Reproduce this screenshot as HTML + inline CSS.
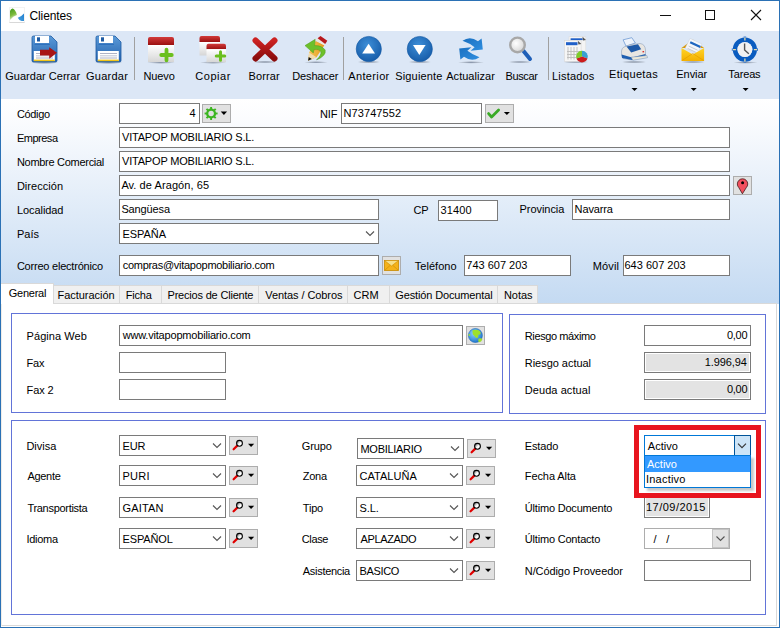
<!DOCTYPE html>
<html><head><meta charset="utf-8"><style>
html,body{margin:0;padding:0;width:780px;height:628px;overflow:hidden;background:#fff}
body{position:relative;font-family:'Liberation Sans', sans-serif}
.a{position:absolute}
.t{position:absolute;white-space:nowrap;font-family:'Liberation Sans', sans-serif}
svg{position:absolute;left:0;top:0}
</style></head><body>
<div class="a" style="left:0px;top:0px;width:780px;height:628px;background:#ffffff;"></div>
<div class="a" style="left:1px;top:31px;width:778px;height:68px;background:#dce7f6;"></div>
<div class="a" style="left:1px;top:99px;width:778px;height:205px;background:linear-gradient(#ffffff 0px, #fbfcfe 20px, #c4daf2 205px);"></div>
<div class="t" style="left:29.50px;top:10px;font-size:12px;line-height:13px;letter-spacing:-0.114px;color:#000;">Clientes</div>
<div class="a" style="left:134px;top:37px;width:1px;height:43px;background:#a0a0a0;"></div>
<div class="a" style="left:343px;top:37px;width:1px;height:43px;background:#a0a0a0;"></div>
<div class="a" style="left:548px;top:37px;width:1px;height:43px;background:#a0a0a0;"></div>
<div class="t" style="left:5.25px;top:70px;font-size:11px;line-height:13px;letter-spacing:0.019px;color:#000;">Guardar Cerrar</div>
<div class="t" style="left:86.00px;top:70px;font-size:11px;line-height:13px;letter-spacing:0.250px;color:#000;">Guardar</div>
<div class="t" style="left:143.50px;top:70px;font-size:11px;line-height:13px;letter-spacing:-0.125px;color:#000;">Nuevo</div>
<div class="t" style="left:195.25px;top:70px;font-size:11px;line-height:13px;letter-spacing:0.550px;color:#000;">Copiar</div>
<div class="t" style="left:248.50px;top:70px;font-size:11px;line-height:13px;letter-spacing:0.100px;color:#000;">Borrar</div>
<div class="t" style="left:292.25px;top:70px;font-size:11px;line-height:13px;letter-spacing:-0.143px;color:#000;">Deshacer</div>
<div class="t" style="left:348.25px;top:70px;font-size:11px;line-height:13px;letter-spacing:0.357px;color:#000;">Anterior</div>
<div class="t" style="left:395.25px;top:70px;font-size:11px;line-height:13px;letter-spacing:0.156px;color:#000;">Siguiente</div>
<div class="t" style="left:446.25px;top:70px;font-size:11px;line-height:13px;letter-spacing:0.028px;color:#000;">Actualizar</div>
<div class="t" style="left:505.50px;top:70px;font-size:11px;line-height:13px;letter-spacing:-0.360px;color:#000;">Buscar</div>
<div class="t" style="left:552.00px;top:70px;font-size:11px;line-height:13px;letter-spacing:0.200px;color:#000;">Listados</div>
<div class="t" style="left:609.00px;top:68px;font-size:11px;line-height:13px;letter-spacing:0.362px;color:#000;">Etiquetas</div>
<div class="t" style="left:676.30px;top:68px;font-size:11px;line-height:13px;letter-spacing:-0.060px;color:#000;">Enviar</div>
<div class="t" style="left:728.30px;top:68px;font-size:11px;line-height:13px;letter-spacing:-0.140px;color:#000;">Tareas</div>
<div class="t" style="left:16.90px;top:108px;font-size:11px;line-height:13px;letter-spacing:-0.320px;color:#000;">Código</div>
<div class="t" style="left:16.90px;top:132px;font-size:11px;line-height:13px;letter-spacing:-0.483px;color:#000;">Empresa</div>
<div class="t" style="left:16.90px;top:156px;font-size:11px;line-height:13px;letter-spacing:-0.287px;color:#000;">Nombre Comercial</div>
<div class="t" style="left:16.90px;top:180px;font-size:11px;line-height:13px;letter-spacing:0.038px;color:#000;">Dirección</div>
<div class="t" style="left:16.90px;top:204px;font-size:11px;line-height:13px;letter-spacing:-0.062px;color:#000;">Localidad</div>
<div class="t" style="left:16.90px;top:228px;font-size:11px;line-height:13px;letter-spacing:0.033px;color:#000;">País</div>
<div class="t" style="left:16.90px;top:260px;font-size:11px;line-height:13px;letter-spacing:-0.218px;color:#000;">Correo electrónico</div>
<div class="a" style="left:119px;top:103px;width:81px;height:21px;background:#ffffff;border:1px solid #7a7a7a;box-sizing:border-box;"></div>
<div class="t" style="left:189.50px;top:107px;font-size:11px;line-height:13px;letter-spacing:-0.250px;color:#000;">4</div>
<div class="a" style="left:202px;top:104px;width:29px;height:19px;background:#e1e1e1;border:1px solid #adadad;box-sizing:border-box;"></div>
<div class="t" style="left:320.00px;top:108px;font-size:11px;line-height:13px;letter-spacing:-0.100px;color:#000;">NIF</div>
<div class="a" style="left:341px;top:103px;width:141px;height:21px;background:#ffffff;border:1px solid #7a7a7a;box-sizing:border-box;"></div>
<div class="t" style="left:343.40px;top:107px;font-size:11px;line-height:13px;letter-spacing:0.113px;color:#000;">N73747552</div>
<div class="a" style="left:485px;top:104px;width:29px;height:19px;background:#e1e1e1;border:1px solid #adadad;box-sizing:border-box;"></div>
<div class="a" style="left:119px;top:127px;width:611px;height:21px;background:#ffffff;border:1px solid #7a7a7a;box-sizing:border-box;"></div>
<div class="t" style="left:122.00px;top:131px;font-size:11px;line-height:13px;letter-spacing:-0.191px;color:#000;">VITAPOP MOBILIARIO S.L.</div>
<div class="a" style="left:119px;top:151px;width:611px;height:21px;background:#ffffff;border:1px solid #7a7a7a;box-sizing:border-box;"></div>
<div class="t" style="left:122.00px;top:155px;font-size:11px;line-height:13px;letter-spacing:-0.191px;color:#000;">VITAPOP MOBILIARIO S.L.</div>
<div class="a" style="left:119px;top:175px;width:611px;height:21px;background:#ffffff;border:1px solid #7a7a7a;box-sizing:border-box;"></div>
<div class="t" style="left:121.40px;top:179px;font-size:11px;line-height:13px;letter-spacing:0.075px;color:#000;">Av. de Aragón, 65</div>
<div class="a" style="left:733px;top:176px;width:19px;height:19px;background:#e1e1e1;border:1px solid #adadad;box-sizing:border-box;"></div>
<div class="a" style="left:119px;top:199px;width:260px;height:21px;background:#ffffff;border:1px solid #7a7a7a;box-sizing:border-box;"></div>
<div class="t" style="left:121.40px;top:203px;font-size:11px;line-height:13px;letter-spacing:-0.129px;color:#000;">Sangüesa</div>
<div class="t" style="left:413.60px;top:204px;font-size:11px;line-height:13px;letter-spacing:-0.200px;color:#000;">CP</div>
<div class="a" style="left:438px;top:200px;width:60px;height:21px;background:#ffffff;border:1px solid #7a7a7a;box-sizing:border-box;"></div>
<div class="t" style="left:440.50px;top:204px;font-size:11px;line-height:13px;letter-spacing:0.125px;color:#000;">31400</div>
<div class="t" style="left:519.50px;top:203px;font-size:11px;line-height:13px;letter-spacing:-0.050px;color:#000;">Provincia</div>
<div class="a" style="left:572px;top:199px;width:158px;height:21px;background:#ffffff;border:1px solid #7a7a7a;box-sizing:border-box;"></div>
<div class="t" style="left:574.60px;top:203px;font-size:11px;line-height:13px;letter-spacing:-0.133px;color:#000;">Navarra</div>
<div class="a" style="left:119px;top:223px;width:260px;height:21px;background:#ffffff;border:1px solid #7a7a7a;box-sizing:border-box;"></div>
<div class="t" style="left:122.40px;top:228px;font-size:11px;line-height:13px;letter-spacing:-0.040px;color:#000;">ESPAÑA</div>
<div class="a" style="left:119px;top:255px;width:260px;height:21px;background:#ffffff;border:1px solid #7a7a7a;box-sizing:border-box;"></div>
<div class="t" style="left:122.70px;top:259px;font-size:11px;line-height:13px;letter-spacing:-0.275px;color:#000;">compras@vitapopmobiliario.com</div>
<div class="a" style="left:382px;top:256px;width:19px;height:19px;background:#e1e1e1;border:1px solid #adadad;box-sizing:border-box;"></div>
<div class="t" style="left:414.70px;top:260px;font-size:11px;line-height:13px;letter-spacing:0.043px;color:#000;">Teléfono</div>
<div class="a" style="left:464px;top:255px;width:107px;height:21px;background:#ffffff;border:1px solid #7a7a7a;box-sizing:border-box;"></div>
<div class="t" style="left:466.30px;top:259px;font-size:11px;line-height:13px;letter-spacing:-0.000px;color:#000;">743 607 203</div>
<div class="t" style="left:592.80px;top:260px;font-size:11px;line-height:13px;letter-spacing:0.125px;color:#000;">Móvil</div>
<div class="a" style="left:623px;top:255px;width:107px;height:21px;background:#ffffff;border:1px solid #7a7a7a;box-sizing:border-box;"></div>
<div class="t" style="left:624.50px;top:259px;font-size:11px;line-height:13px;letter-spacing:0.000px;color:#000;">643 607 203</div>
<div class="a" style="left:1px;top:303px;width:776px;height:323px;background:#ffffff;"></div>
<div class="a" style="left:1px;top:303px;width:776px;height:1px;background:#d9d9d9;"></div>
<div class="a" style="left:776px;top:303px;width:1px;height:323px;background:#d9d9d9;"></div>
<div class="a" style="left:1px;top:625px;width:776px;height:1px;background:#d9d9d9;"></div>
<div class="a" style="left:1px;top:303px;width:1px;height:323px;background:#f0ede8;"></div>
<div class="a" style="left:53px;top:285px;width:67px;height:19px;background:#f0f0f0;border:1px solid #d9d9d9;box-sizing:border-box;"></div>
<div class="t" style="left:57.50px;top:289px;font-size:11px;line-height:13px;letter-spacing:-0.030px;color:#000;">Facturación</div>
<div class="a" style="left:119px;top:285px;width:43px;height:19px;background:#f0f0f0;border:1px solid #d9d9d9;box-sizing:border-box;"></div>
<div class="t" style="left:125.80px;top:289px;font-size:11px;line-height:13px;letter-spacing:-0.200px;color:#000;">Ficha</div>
<div class="a" style="left:161px;top:285px;width:98px;height:19px;background:#f0f0f0;border:1px solid #d9d9d9;box-sizing:border-box;"></div>
<div class="t" style="left:167.50px;top:289px;font-size:11px;line-height:13px;letter-spacing:-0.194px;color:#000;">Precios de Cliente</div>
<div class="a" style="left:258px;top:285px;width:90px;height:19px;background:#f0f0f0;border:1px solid #d9d9d9;box-sizing:border-box;"></div>
<div class="t" style="left:265.30px;top:289px;font-size:11px;line-height:13px;letter-spacing:-0.079px;color:#000;">Ventas / Cobros</div>
<div class="a" style="left:347px;top:285px;width:43px;height:19px;background:#f0f0f0;border:1px solid #d9d9d9;box-sizing:border-box;"></div>
<div class="t" style="left:353.50px;top:289px;font-size:11px;line-height:13px;letter-spacing:0.000px;color:#000;">CRM</div>
<div class="a" style="left:389px;top:285px;width:109px;height:19px;background:#f0f0f0;border:1px solid #d9d9d9;box-sizing:border-box;"></div>
<div class="t" style="left:395.30px;top:289px;font-size:11px;line-height:13px;letter-spacing:-0.135px;color:#000;">Gestión Documental</div>
<div class="a" style="left:497px;top:285px;width:41px;height:19px;background:#f0f0f0;border:1px solid #d9d9d9;box-sizing:border-box;"></div>
<div class="t" style="left:504.00px;top:289px;font-size:11px;line-height:13px;letter-spacing:-0.075px;color:#000;">Notas</div>
<div class="a" style="left:1px;top:283px;width:53px;height:21px;background:#ffffff;"></div>
<div class="a" style="left:1px;top:283px;width:53px;height:1px;background:#d9d9d9;"></div>
<div class="a" style="left:53px;top:283px;width:1px;height:21px;background:#d9d9d9;"></div>
<div class="t" style="left:8.80px;top:287px;font-size:11px;line-height:13px;letter-spacing:-0.267px;color:#000;">General</div>
<div class="a" style="left:11px;top:313px;width:492px;height:100px;border:1px solid #6274d8;box-sizing:border-box;"></div>
<div class="a" style="left:509px;top:314px;width:257px;height:100px;border:1px solid #6274d8;box-sizing:border-box;"></div>
<div class="a" style="left:11px;top:420px;width:755px;height:195px;border:1px solid #6274d8;box-sizing:border-box;"></div>
<div class="t" style="left:26.60px;top:330px;font-size:11px;line-height:13px;letter-spacing:0.056px;color:#000;">Página Web</div>
<div class="a" style="left:119px;top:325px;width:344px;height:21px;background:#ffffff;border:1px solid #7a7a7a;box-sizing:border-box;"></div>
<div class="t" style="left:122.70px;top:329px;font-size:11px;line-height:13px;letter-spacing:-0.192px;color:#000;">www.vitapopmobiliario.com</div>
<div class="a" style="left:466px;top:326px;width:19px;height:19px;background:#e1e1e1;border:1px solid #adadad;box-sizing:border-box;"></div>
<div class="t" style="left:26.60px;top:357px;font-size:11px;line-height:13px;letter-spacing:-0.200px;color:#000;">Fax</div>
<div class="a" style="left:119px;top:352px;width:107px;height:21px;background:#ffffff;border:1px solid #7a7a7a;box-sizing:border-box;"></div>
<div class="t" style="left:26.60px;top:384px;font-size:11px;line-height:13px;letter-spacing:-0.100px;color:#000;">Fax 2</div>
<div class="a" style="left:119px;top:379px;width:107px;height:21px;background:#ffffff;border:1px solid #7a7a7a;box-sizing:border-box;"></div>
<div class="t" style="left:524.80px;top:330px;font-size:11px;line-height:13px;letter-spacing:-0.392px;color:#000;">Riesgo máximo</div>
<div class="a" style="left:644px;top:325px;width:107px;height:21px;background:#ffffff;border:1px solid #7a7a7a;box-sizing:border-box;"></div>
<div class="t" style="left:727.00px;top:329px;font-size:11px;line-height:13px;letter-spacing:-0.300px;color:#000;">0,00</div>
<div class="t" style="left:524.80px;top:357px;font-size:11px;line-height:13px;letter-spacing:-0.033px;color:#000;">Riesgo actual</div>
<div class="a" style="left:644px;top:352px;width:107px;height:21px;background:#e3e3e3;border:1px solid #7a7a7a;box-sizing:border-box;box-shadow:inset 0 0 0 1px #ffffff;"></div>
<div class="t" style="left:704.70px;top:356px;font-size:11px;line-height:13px;letter-spacing:-0.086px;color:#000;">1.996,94</div>
<div class="t" style="left:524.80px;top:384px;font-size:11px;line-height:13px;letter-spacing:0.064px;color:#000;">Deuda actual</div>
<div class="a" style="left:644px;top:379px;width:107px;height:21px;background:#e3e3e3;border:1px solid #7a7a7a;box-sizing:border-box;box-shadow:inset 0 0 0 1px #ffffff;"></div>
<div class="t" style="left:727.00px;top:383px;font-size:11px;line-height:13px;letter-spacing:-0.300px;color:#000;">0,00</div>
<div class="t" style="left:26.40px;top:440px;font-size:11px;line-height:13px;letter-spacing:0.000px;color:#000;">Divisa</div>
<div class="a" style="left:119px;top:435px;width:107px;height:21px;background:#ffffff;border:1px solid #7a7a7a;box-sizing:border-box;"></div>
<div class="t" style="left:122.50px;top:440px;font-size:11px;line-height:13px;letter-spacing:-0.100px;color:#000;">EUR</div>
<div class="a" style="left:229px;top:436px;width:29px;height:19px;background:#e1e1e1;border:1px solid #adadad;box-sizing:border-box;"></div>
<div class="t" style="left:27.40px;top:470px;font-size:11px;line-height:13px;letter-spacing:-0.280px;color:#000;">Agente</div>
<div class="a" style="left:119px;top:465px;width:107px;height:21px;background:#ffffff;border:1px solid #7a7a7a;box-sizing:border-box;"></div>
<div class="t" style="left:122.50px;top:470px;font-size:11px;line-height:13px;letter-spacing:0.267px;color:#000;">PURI</div>
<div class="a" style="left:229px;top:466px;width:29px;height:19px;background:#e1e1e1;border:1px solid #adadad;box-sizing:border-box;"></div>
<div class="t" style="left:27.40px;top:502px;font-size:11px;line-height:13px;letter-spacing:-0.292px;color:#000;">Transportista</div>
<div class="a" style="left:119px;top:497px;width:107px;height:21px;background:#ffffff;border:1px solid #7a7a7a;box-sizing:border-box;"></div>
<div class="t" style="left:122.50px;top:502px;font-size:11px;line-height:13px;letter-spacing:0.180px;color:#000;">GAITAN</div>
<div class="a" style="left:229px;top:498px;width:29px;height:19px;background:#e1e1e1;border:1px solid #adadad;box-sizing:border-box;"></div>
<div class="t" style="left:26.40px;top:533px;font-size:11px;line-height:13px;letter-spacing:-0.260px;color:#000;">Idioma</div>
<div class="a" style="left:119px;top:528px;width:107px;height:21px;background:#ffffff;border:1px solid #7a7a7a;box-sizing:border-box;"></div>
<div class="t" style="left:122.50px;top:533px;font-size:11px;line-height:13px;letter-spacing:-0.133px;color:#000;">ESPAÑOL</div>
<div class="a" style="left:229px;top:529px;width:29px;height:19px;background:#e1e1e1;border:1px solid #adadad;box-sizing:border-box;"></div>
<div class="t" style="left:301.80px;top:440px;font-size:11px;line-height:13px;letter-spacing:-0.100px;color:#000;">Grupo</div>
<div class="a" style="left:357px;top:438px;width:107px;height:21px;background:#ffffff;border:1px solid #7a7a7a;box-sizing:border-box;"></div>
<div class="t" style="left:360.50px;top:443px;font-size:11px;line-height:13px;letter-spacing:-0.289px;color:#000;">MOBILIARIO</div>
<div class="a" style="left:467px;top:439px;width:29px;height:19px;background:#e1e1e1;border:1px solid #adadad;box-sizing:border-box;"></div>
<div class="t" style="left:302.80px;top:470px;font-size:11px;line-height:13px;letter-spacing:-0.267px;color:#000;">Zona</div>
<div class="a" style="left:356px;top:465px;width:107px;height:21px;background:#ffffff;border:1px solid #7a7a7a;box-sizing:border-box;"></div>
<div class="t" style="left:359.40px;top:470px;font-size:11px;line-height:13px;letter-spacing:0.057px;color:#000;">CATALUÑA</div>
<div class="a" style="left:466px;top:466px;width:29px;height:19px;background:#e1e1e1;border:1px solid #adadad;box-sizing:border-box;"></div>
<div class="t" style="left:302.80px;top:502px;font-size:11px;line-height:13px;letter-spacing:-0.200px;color:#000;">Tipo</div>
<div class="a" style="left:356px;top:497px;width:107px;height:21px;background:#ffffff;border:1px solid #7a7a7a;box-sizing:border-box;"></div>
<div class="t" style="left:359.40px;top:502px;font-size:11px;line-height:13px;letter-spacing:-0.033px;color:#000;">S.L.</div>
<div class="a" style="left:466px;top:498px;width:29px;height:19px;background:#e1e1e1;border:1px solid #adadad;box-sizing:border-box;"></div>
<div class="t" style="left:301.80px;top:533px;font-size:11px;line-height:13px;letter-spacing:-0.375px;color:#000;">Clase</div>
<div class="a" style="left:356px;top:528px;width:107px;height:21px;background:#ffffff;border:1px solid #7a7a7a;box-sizing:border-box;"></div>
<div class="t" style="left:360.40px;top:533px;font-size:11px;line-height:13px;letter-spacing:-0.343px;color:#000;">APLAZADO</div>
<div class="a" style="left:466px;top:529px;width:29px;height:19px;background:#e1e1e1;border:1px solid #adadad;box-sizing:border-box;"></div>
<div class="t" style="left:302.80px;top:565px;font-size:11px;line-height:13px;letter-spacing:-0.300px;color:#000;">Asistencia</div>
<div class="a" style="left:356px;top:560px;width:107px;height:21px;background:#ffffff;border:1px solid #7a7a7a;box-sizing:border-box;"></div>
<div class="t" style="left:359.40px;top:565px;font-size:11px;line-height:13px;letter-spacing:-0.320px;color:#000;">BASICO</div>
<div class="a" style="left:466px;top:561px;width:29px;height:19px;background:#e1e1e1;border:1px solid #adadad;box-sizing:border-box;"></div>
<div class="t" style="left:524.80px;top:440px;font-size:11px;line-height:13px;letter-spacing:-0.140px;color:#000;">Estado</div>
<div class="t" style="left:524.80px;top:470px;font-size:11px;line-height:13px;letter-spacing:-0.089px;color:#000;">Fecha Alta</div>
<div class="t" style="left:524.80px;top:502px;font-size:11px;line-height:13px;letter-spacing:-0.193px;color:#000;">Último Documento</div>
<div class="t" style="left:524.80px;top:533px;font-size:11px;line-height:13px;letter-spacing:-0.193px;color:#000;">Último Contacto</div>
<div class="t" style="left:524.80px;top:565px;font-size:11px;line-height:13px;letter-spacing:-0.094px;color:#000;">N/Código Proveedor</div>
<div class="a" style="left:644px;top:496px;width:66px;height:22px;background:#e3e3e3;border:1px solid #7a7a7a;box-sizing:border-box;box-shadow:inset 0 0 0 1px #ffffff;"></div>
<div class="t" style="left:646.00px;top:501px;font-size:11px;line-height:13px;letter-spacing:0.478px;color:#000;">17/09/2015</div>
<div class="a" style="left:644px;top:528px;width:86px;height:21px;background:#ffffff;border:1px solid #adadad;box-sizing:border-box;"></div>
<div class="a" style="left:712px;top:529px;width:17px;height:19px;background:#e1e1e1;border:1px solid #c4c4c4;box-sizing:border-box;"></div>
<div class="t" style="left:653.50px;top:533px;font-size:11px;line-height:13px;letter-spacing:1.167px;color:#000;">/&nbsp;&nbsp;/</div>
<div class="a" style="left:644px;top:560px;width:107px;height:21px;background:#ffffff;border:1px solid #7a7a7a;box-sizing:border-box;"></div>
<svg width="780" height="628" viewBox="0 0 780 628">
<g>
 <linearGradient id="tig" x1="0" y1="0" x2="0.3" y2="1"><stop offset="0" stop-color="#3f9a1e"/><stop offset="0.6" stop-color="#7cbb3c"/><stop offset="1" stop-color="#e4f0d8"/></linearGradient>
 <linearGradient id="tib" x1="1" y1="0" x2="0" y2="1"><stop offset="0" stop-color="#1f7fd0"/><stop offset="1" stop-color="#4aa0dc"/></linearGradient>
 <rect x="9.5" y="7.5" width="15" height="15" fill="#fff" stroke="#f3f3f3" stroke-width="1"/>
 <path d="M9.5 22.5 H24.5" stroke="#d8d8d8" stroke-width="1"/>
 <path d="M10 20 L10 11 Q11 8.3 12.7 8.5 Q15.5 9.5 17 15 Q13 16 10 20 Z" fill="url(#tig)"/>
 <path d="M17.8 17.8 Q21 17 24 13.5 V21 H21.5 Q19 20.5 17.8 17.8 Z" fill="url(#tib)"/>
</g>
<path d="M660 15.5 H671" stroke="#111" stroke-width="1"/>
<rect x="705.5" y="10.5" width="9" height="9" fill="none" stroke="#111" stroke-width="1"/>
<path d="M751 10 L761 20 M761 10 L751 20" stroke="#111" stroke-width="1.1"/>
<path d="M631.5 88 H637.5 L634.5 91 Z" fill="#000"/>
<path d="M690.7 88 H696.7 L693.7 91 Z" fill="#000"/>
<path d="M742.6 88 H748.6 L745.6 91 Z" fill="#000"/>
<defs>
 <linearGradient id="flop" x1="0" y1="0" x2="0" y2="1"><stop offset="0" stop-color="#5b9ad8"/><stop offset="1" stop-color="#2462ad"/></linearGradient>
 <linearGradient id="cardw" x1="0" y1="0" x2="0" y2="1"><stop offset="0" stop-color="#ffffff"/><stop offset="1" stop-color="#d6d6d6"/></linearGradient>
 <linearGradient id="redb" x1="0" y1="0" x2="0" y2="1"><stop offset="0" stop-color="#d23a3a"/><stop offset="1" stop-color="#9a1010"/></linearGradient>
 <linearGradient id="xred" x1="0" y1="0" x2="0" y2="1"><stop offset="0" stop-color="#cc2222"/><stop offset="1" stop-color="#8a0c0c"/></linearGradient>
 <radialGradient id="bcirc" cx="0.45" cy="0.35" r="0.7"><stop offset="0" stop-color="#3e8fd8"/><stop offset="1" stop-color="#1459a6"/></radialGradient>
 <linearGradient id="refr" x1="0" y1="0" x2="1" y2="1"><stop offset="0" stop-color="#1b70c0"/><stop offset="1" stop-color="#2f8ee0"/></linearGradient>
 <radialGradient id="lens" cx="0.4" cy="0.4" r="0.6"><stop offset="0" stop-color="#ffffff"/><stop offset="1" stop-color="#d8d8d8"/></radialGradient>
 <linearGradient id="envy" x1="0" y1="0" x2="0" y2="1"><stop offset="0" stop-color="#ffd42a"/><stop offset="1" stop-color="#f4b000"/></linearGradient>
 <radialGradient id="globe" cx="0.4" cy="0.35" r="0.7"><stop offset="0" stop-color="#8fd0ff"/><stop offset="1" stop-color="#1b74c9"/></radialGradient>
 <radialGradient id="shad" cx="0.5" cy="0.5" r="0.5"><stop offset="0" stop-color="#203050" stop-opacity="0.45"/><stop offset="1" stop-color="#000" stop-opacity="0"/></radialGradient>
</defs>
<ellipse cx="44.5" cy="62.6" rx="14" ry="1.5" fill="url(#shad)"/>
<path d="M33.5 36 H51 L57 42 V60.5 Q57 62 55.5 62 H33.5 Q32 62 32 60.5 V37.5 Q32 36 33.5 36 Z" fill="url(#flop)" stroke="#1d5aa3" stroke-width="0.8"/>
<rect x="35" y="36" width="14" height="7" fill="#ffffff"/>
<rect x="37" y="37.3" width="3" height="4.2" fill="#1d5aa3"/>
<path d="M34.5 44.3 H50" stroke="#2a6bb8" stroke-width="1"/>
<rect x="33.8" y="51" width="21" height="10" fill="#ffffff"/>
<rect x="33.8" y="59.6" width="21" height="1.6" fill="#f0c419"/>
<path d="M36 53.5 H53 M36 58 H53" stroke="#9aa0b8" stroke-width="0.8"/>
<path d="M36 55.8 H53" stroke="#c8ccd8" stroke-width="1.2"/>
<path d="M40 49.8 H49.2 V47.2 L57 52.7 L49.2 58.7 V55.6 H40 Z" fill="#a81414"/>
<ellipse cx="108.5" cy="62.6" rx="14" ry="1.5" fill="url(#shad)"/>
<path d="M97.5 36 H115 L121 42 V60.5 Q121 62 119.5 62 H97.5 Q96 62 96 60.5 V37.5 Q96 36 97.5 36 Z" fill="url(#flop)" stroke="#1d5aa3" stroke-width="0.8"/>
<rect x="99" y="36" width="14" height="7" fill="#ffffff"/>
<rect x="101" y="37.3" width="3" height="4.2" fill="#1d5aa3"/>
<path d="M98.5 44.3 H114" stroke="#2a6bb8" stroke-width="1"/>
<rect x="97.8" y="51" width="21" height="10" fill="#ffffff"/>
<rect x="97.8" y="59.6" width="21" height="1.6" fill="#f0c419"/>
<path d="M100 53.5 H117 M100 58 H117" stroke="#9aa0b8" stroke-width="0.8"/>
<path d="M100 55.8 H117" stroke="#c8ccd8" stroke-width="1.2"/>
<ellipse cx="161" cy="62.5" rx="14" ry="1.4" fill="url(#shad)"/>
<path d="M148 39 Q148 37 150 37 H172 Q174 37 174 39 V45 H148 Z" fill="url(#redb)"/>
<rect x="148" y="45" width="26" height="17" fill="url(#cardw)"/>
<path d="M148 45.5 H174" stroke="#ffffff" stroke-width="1"/>
<path d="M161.25 55 H171.75 M166.5 49.75 V60.25" stroke="#6abf1e" stroke-width="3.8" stroke-linecap="round"/>
<ellipse cx="213" cy="62.5" rx="13" ry="1.4" fill="url(#shad)"/>
<path d="M199.5 38 Q199.5 36 201.5 36 H218.0 Q220.0 36 220.0 38 V42 H199.5 Z" fill="url(#redb)"/>
<rect x="199.5" y="42" width="20.5" height="13.5" fill="url(#cardw)"/>
<path d="M199.5 42.5 H220.0" stroke="#ffffff" stroke-width="1"/>
<path d="M206.5 45.8 Q206.5 43.8 208.5 43.8 H224.0 Q226.0 43.8 226.0 45.8 V49.3 H206.5 Z" fill="url(#redb)"/>
<rect x="206.5" y="49.3" width="19.5" height="13.0" fill="url(#cardw)"/>
<path d="M206.5 49.8 H226.0" stroke="#ffffff" stroke-width="1"/>
<path d="M216.25 56 H224.75 M220.5 51.75 V60.25" stroke="#6abf1e" stroke-width="3" stroke-linecap="round"/>
<ellipse cx="265" cy="62" rx="12" ry="1.4" fill="url(#shad)"/>
<path d="M255.5 40.5 L274.5 58.5 M274.5 40.5 L255.5 58.5" stroke="url(#xred)" stroke-width="6" stroke-linecap="round"/>
<ellipse cx="316" cy="62.3" rx="12" ry="1.2" fill="url(#shad)"/>
<linearGradient id="penc" x1="0" y1="0" x2="1" y2="0"><stop offset="0" stop-color="#f6c75a"/><stop offset="1" stop-color="#e39a1c"/></linearGradient>
<path d="M315.7 40.9 L324.4 45.3 L316.5 57.2 L308.1 60.8 L309.1 52.4 Z" fill="url(#penc)"/>
<path d="M309.1 52.4 L316.5 57.2 L308.1 60.8 Z" fill="#f3dcae"/>
<path d="M308.1 60.8 L308.7 57 L311.8 58.9 Z" fill="#111"/>
<path d="M316 40.4 L318 37.4 L326.2 42.6 L324.6 45.6 Z" fill="#ece8e0"/>
<path d="M317.6 38.3 L320.5 36.1 L327.3 40.8 L325.2 43.9 Z" fill="#b8181c"/>
<path d="M305 45.6 L315.2 39.3 L314.6 45.6 Q321.5 45.3 325.2 50 Q326.5 55.8 316.5 59.9 Q321.8 55 320.8 51.6 Q318.8 48.6 314 49.6 L313.3 53 Z" fill="#6cc02a" stroke="#4e9a1c" stroke-width="0.5"/>
<ellipse cx="368.8" cy="62" rx="12" ry="1.3" fill="url(#shad)"/>
<circle cx="368.8" cy="49" r="12.6" fill="url(#bcirc)" stroke="#1259a5" stroke-width="0.6"/>
<path d="M362.2 53.6 H375.0 L368.6 43.8 Z" fill="#ffffff"/>
<ellipse cx="419.8" cy="62" rx="12" ry="1.3" fill="url(#shad)"/>
<circle cx="419.8" cy="49" r="12.6" fill="url(#bcirc)" stroke="#1259a5" stroke-width="0.6"/>
<path d="M413.0 45 H425.6 L419.3 55 Z" fill="#ffffff"/>
<ellipse cx="471" cy="62.4" rx="13" ry="1.3" fill="url(#shad)"/>
<path d="M462.5 40.8 Q470 35.5 478 41.3 L481.6 38.4 L482.8 49.6 L470.6 50.8 L474.6 47.2 Q469.5 43.2 462.5 40.8 Z" fill="url(#refr)"/>
<path d="M479.5 57.2 Q472 62.5 464 56.7 L460.4 59.6 L459.2 48.4 L471.4 47.2 L467.4 50.8 Q472.5 54.8 479.5 57.2 Z" fill="url(#refr)"/>
<ellipse cx="520" cy="62" rx="12" ry="1.3" fill="url(#shad)"/>
<path d="M523.5 51 L530 59" stroke="#1f5fb8" stroke-width="4" stroke-linecap="round"/>
<circle cx="517.5" cy="44.9" r="7.3" fill="url(#lens)" stroke="#a8a8a8" stroke-width="2.4"/>
<ellipse cx="576" cy="62" rx="13" ry="1.4" fill="url(#shad)"/>
<rect x="569" y="36.7" width="16.8" height="22" fill="#f4f4f4" stroke="#dcdcdc" stroke-width="0.6"/>
<rect x="570.6" y="38.3" width="12" height="1.8" fill="#1f5fc8"/>
<rect x="564.3" y="40.6" width="16.8" height="20.8" fill="#f6f6f6" stroke="#d8d8d8" stroke-width="0.6"/>
<rect x="566" y="42.2" width="11.5" height="3" fill="#1f5fc8"/>
<path d="M568 47 V59.5 M571 47 V59.5 M574 47 V59.5 M577 47 V59.5 M567 51.5 H580 M567 54.5 H580 M567 57.5 H580" stroke="#bcbcbc" stroke-width="0.9"/>
<path d="M582 56.6 L582 50.8 A5.8 5.8 0 0 1 587.45 58.58 Z" fill="#3aa0d0"/>
<path d="M582 56.6 L587.45 58.58 A5.8 5.8 0 0 1 576.55 58.58 Z" fill="#cc1c1c"/>
<path d="M582 56.6 L576.55 58.58 A5.8 5.8 0 0 1 582 50.8 Z" fill="#7ccc2a"/>
<path d="M582.5 36.8 L586 40 L583 40.5 Z M577.8 40.8 L581.3 44 L578.4 44.6 Z" fill="#555"/>
<ellipse cx="634" cy="62" rx="13" ry="1.3" fill="url(#shad)"/>
<path d="M623.1 39.8 L631.8 37.7 L635.4 43 L626 46.1 Z" fill="#eef3fb" stroke="#5f8fce" stroke-width="0.7"/>
<path d="M624 47 Q630 44 640 43.5 Q645 44 645.5 50 V56 L632 60 L623 58.5 Q621 56 621.5 51 Q621.8 48 624 47 Z" fill="#e8e6e2" stroke="#8f9fb8" stroke-width="0.6"/>
<path d="M621.6 54.5 L632 57.5 L645.5 54 V56.5 L632 60 L622 58 Z" fill="#1f5fb0"/>
<path d="M626.5 46.4 L638 44.3 L641.2 49.3 L631.2 52.4 Z" fill="#1f5aa8"/>
<path d="M631.2 57.2 L647 55.6 L647.5 57.7 L632.8 60.3 Z" fill="#ece8d8" stroke="#6f8fb8" stroke-width="0.5"/>
<rect x="642.5" y="51" width="1.6" height="1.4" fill="#d83030"/>
<ellipse cx="693" cy="62" rx="13" ry="1.3" fill="url(#shad)"/>
<path d="M681.5 48 L692.8 39.5 L704.1 48 Z" fill="#d99a10"/>
<path d="M690 38.3 L702 44 L697.2 54 L685.2 48.3 Z" fill="#f4f6fa" stroke="#c8d0dc" stroke-width="0.5"/>
<path d="M690.2 42.2 L700.4 47" stroke="#1f66c0" stroke-width="2.3"/>
<path d="M688.6 46 L697.6 50.2 M687.6 48.4 L696.4 52.6" stroke="#b8bcc8" stroke-width="0.8"/>
<path d="M681.5 48 L692.8 54.5 L704.1 48 V60.9 H681.5 Z" fill="url(#envy)"/>
<path d="M682 60.5 L692.8 53.5 L703.6 60.5" fill="none" stroke="#e39e00" stroke-width="0.7"/>
<ellipse cx="745.5" cy="62.5" rx="12" ry="1.3" fill="url(#shad)"/>
<circle cx="744.9" cy="49.6" r="9.8" fill="none" stroke="#0a5cc0" stroke-width="4.6"/>
<circle cx="744.9" cy="49.6" r="7.4" fill="#f2f2f2"/>
<path d="M744.6 43.6 V50 L748.8 53.8" fill="none" stroke="#555" stroke-width="1.4"/>
<path d="M744.9 37.2 V40.6 M744.9 58.6 V62 M732.5 49.6 H735.9 M753.9 49.6 H757.3" stroke="#e8dca8" stroke-width="1.3"/>
<path d="M743.6 37 H746.2 M743.6 62.2 H746.2 M732.3 48.3 V50.9 M757.5 48.3 V50.9" stroke="#3a7ad0" stroke-width="1"/>
<circle cx="211.1" cy="113.5" r="3.9" fill="none" stroke="#3cb521" stroke-width="2.3"/>
<path d="M211.10 117.50 L211.10 120.00" stroke="#3cb521" stroke-width="1.9"/>
<path d="M208.27 116.33 L206.50 118.10" stroke="#3cb521" stroke-width="1.9"/>
<path d="M207.10 113.50 L204.60 113.50" stroke="#3cb521" stroke-width="1.9"/>
<path d="M208.27 110.67 L206.50 108.90" stroke="#3cb521" stroke-width="1.9"/>
<path d="M211.10 109.50 L211.10 107.00" stroke="#3cb521" stroke-width="1.9"/>
<path d="M213.93 110.67 L215.70 108.90" stroke="#3cb521" stroke-width="1.9"/>
<path d="M215.10 113.50 L217.60 113.50" stroke="#3cb521" stroke-width="1.9"/>
<path d="M213.93 116.33 L215.70 118.10" stroke="#3cb521" stroke-width="1.9"/>
<path d="M220.75 111.6 H227.05 L223.9 114.89999999999999 Z" fill="#000"/>
<path d="M488.6 113.6 L491.6 117 L498.6 110" fill="none" stroke="#3aaa25" stroke-width="2.8" stroke-linecap="round" stroke-linejoin="round"/>
<path d="M503.9 112 H509.9 L506.9 115 Z" fill="#000"/>
<path d="M742.4 193.8 L738.8 187.6 A5.2 5.2 0 1 1 746.3 187.6 Z" fill="#f2505e" stroke="#2a0a0a" stroke-width="0.7"/>
<circle cx="742.6" cy="182.8" r="1.5" fill="#000"/>
<path d="M366 231.5 L370.0 235.5 L374 231.5" fill="none" stroke="#555" stroke-width="1.1"/>
<rect x="384.5" y="260.5" width="14" height="10" fill="#f5b21a" stroke="#c98a00" stroke-width="0.8"/>
<path d="M384.5 260.5 L391.5 266 L398.5 260.5 Z" fill="#f7e08a" stroke="#c98a00" stroke-width="0.6"/>
<path d="M384.8 270.2 L390 265.5 M398.2 270.2 L393 265.5" stroke="#c98a00" stroke-width="0.6"/>
<circle cx="475.4" cy="335.5" r="7" fill="url(#globe)" stroke="#1a64b8" stroke-width="0.6"/>
<path d="M472.5 330.2 Q476.5 328.8 479.8 331 Q481.5 333 480.2 334.5 L478.2 334.8 Q478.8 337 477.2 338.2 Q475 337.6 474.2 335.6 Q472.2 334.8 472.5 330.2 Z M478.6 338.6 Q481.6 337.6 482.4 339.6 Q481.2 342.4 478.8 342.2 Q477.6 340.2 478.6 338.6 Z M468.6 334 Q470 333.6 470.4 335.2 Q469.4 336.4 468.6 335.8 Z" fill="#9ee02a"/>
<path d="M213 443.5 L217.0 447.5 L221 443.5" fill="none" stroke="#555" stroke-width="1.1"/>
<path d="M237.3 445.6 L233.6 449.3" stroke="#e00000" stroke-width="2.2" stroke-linecap="round"/>
<linearGradient id="lg229436" x1="0" y1="0" x2="1" y2="1"><stop offset="0" stop-color="#505050"/><stop offset="0.55" stop-color="#ffffff"/></linearGradient>
<circle cx="239.5" cy="443.3" r="2.9" fill="url(#lg229436)" stroke="#000" stroke-width="1.1"/>
<path d="M248.0 443.8 H254.2 L251.1 447.0 Z" fill="#000"/>
<path d="M213 473.5 L217.0 477.5 L221 473.5" fill="none" stroke="#555" stroke-width="1.1"/>
<path d="M237.3 475.6 L233.6 479.3" stroke="#e00000" stroke-width="2.2" stroke-linecap="round"/>
<linearGradient id="lg229466" x1="0" y1="0" x2="1" y2="1"><stop offset="0" stop-color="#505050"/><stop offset="0.55" stop-color="#ffffff"/></linearGradient>
<circle cx="239.5" cy="473.3" r="2.9" fill="url(#lg229466)" stroke="#000" stroke-width="1.1"/>
<path d="M248.0 473.8 H254.2 L251.1 477.0 Z" fill="#000"/>
<path d="M213 505.5 L217.0 509.5 L221 505.5" fill="none" stroke="#555" stroke-width="1.1"/>
<path d="M237.3 507.6 L233.6 511.3" stroke="#e00000" stroke-width="2.2" stroke-linecap="round"/>
<linearGradient id="lg229498" x1="0" y1="0" x2="1" y2="1"><stop offset="0" stop-color="#505050"/><stop offset="0.55" stop-color="#ffffff"/></linearGradient>
<circle cx="239.5" cy="505.3" r="2.9" fill="url(#lg229498)" stroke="#000" stroke-width="1.1"/>
<path d="M248.0 505.8 H254.2 L251.1 509.0 Z" fill="#000"/>
<path d="M213 536.5 L217.0 540.5 L221 536.5" fill="none" stroke="#555" stroke-width="1.1"/>
<path d="M237.3 538.6 L233.6 542.3" stroke="#e00000" stroke-width="2.2" stroke-linecap="round"/>
<linearGradient id="lg229529" x1="0" y1="0" x2="1" y2="1"><stop offset="0" stop-color="#505050"/><stop offset="0.55" stop-color="#ffffff"/></linearGradient>
<circle cx="239.5" cy="536.3" r="2.9" fill="url(#lg229529)" stroke="#000" stroke-width="1.1"/>
<path d="M248.0 536.8 H254.2 L251.1 540.0 Z" fill="#000"/>
<path d="M451 446.5 L455.0 450.5 L459 446.5" fill="none" stroke="#555" stroke-width="1.1"/>
<path d="M475.3 448.6 L471.6 452.3" stroke="#e00000" stroke-width="2.2" stroke-linecap="round"/>
<linearGradient id="lg467439" x1="0" y1="0" x2="1" y2="1"><stop offset="0" stop-color="#505050"/><stop offset="0.55" stop-color="#ffffff"/></linearGradient>
<circle cx="477.5" cy="446.3" r="2.9" fill="url(#lg467439)" stroke="#000" stroke-width="1.1"/>
<path d="M486.0 446.8 H492.20000000000005 L489.1 450.0 Z" fill="#000"/>
<path d="M450 473.5 L454.0 477.5 L458 473.5" fill="none" stroke="#555" stroke-width="1.1"/>
<path d="M474.3 475.6 L470.6 479.3" stroke="#e00000" stroke-width="2.2" stroke-linecap="round"/>
<linearGradient id="lg466466" x1="0" y1="0" x2="1" y2="1"><stop offset="0" stop-color="#505050"/><stop offset="0.55" stop-color="#ffffff"/></linearGradient>
<circle cx="476.5" cy="473.3" r="2.9" fill="url(#lg466466)" stroke="#000" stroke-width="1.1"/>
<path d="M485.0 473.8 H491.20000000000005 L488.1 477.0 Z" fill="#000"/>
<path d="M450 505.5 L454.0 509.5 L458 505.5" fill="none" stroke="#555" stroke-width="1.1"/>
<path d="M474.3 507.6 L470.6 511.3" stroke="#e00000" stroke-width="2.2" stroke-linecap="round"/>
<linearGradient id="lg466498" x1="0" y1="0" x2="1" y2="1"><stop offset="0" stop-color="#505050"/><stop offset="0.55" stop-color="#ffffff"/></linearGradient>
<circle cx="476.5" cy="505.3" r="2.9" fill="url(#lg466498)" stroke="#000" stroke-width="1.1"/>
<path d="M485.0 505.8 H491.20000000000005 L488.1 509.0 Z" fill="#000"/>
<path d="M450 536.5 L454.0 540.5 L458 536.5" fill="none" stroke="#555" stroke-width="1.1"/>
<path d="M474.3 538.6 L470.6 542.3" stroke="#e00000" stroke-width="2.2" stroke-linecap="round"/>
<linearGradient id="lg466529" x1="0" y1="0" x2="1" y2="1"><stop offset="0" stop-color="#505050"/><stop offset="0.55" stop-color="#ffffff"/></linearGradient>
<circle cx="476.5" cy="536.3" r="2.9" fill="url(#lg466529)" stroke="#000" stroke-width="1.1"/>
<path d="M485.0 536.8 H491.20000000000005 L488.1 540.0 Z" fill="#000"/>
<path d="M450 568.5 L454.0 572.5 L458 568.5" fill="none" stroke="#555" stroke-width="1.1"/>
<path d="M474.3 570.6 L470.6 574.3" stroke="#e00000" stroke-width="2.2" stroke-linecap="round"/>
<linearGradient id="lg466561" x1="0" y1="0" x2="1" y2="1"><stop offset="0" stop-color="#505050"/><stop offset="0.55" stop-color="#ffffff"/></linearGradient>
<circle cx="476.5" cy="568.3" r="2.9" fill="url(#lg466561)" stroke="#000" stroke-width="1.1"/>
<path d="M485.0 568.8 H491.20000000000005 L488.1 572.0 Z" fill="#000"/>
<path d="M716.5 536.5 L720.5 540.5 L724.5 536.5" fill="none" stroke="#555" stroke-width="1.1"/></svg>
<div class="a" style="left:634px;top:425px;width:127px;height:73px;border:5px solid #e8141e;box-sizing:border-box;"></div>
<div class="a" style="left:639px;top:430px;width:117px;height:63px;background:#ffffff;"></div>
<div class="a" style="left:644px;top:435px;width:107px;height:21px;background:#ffffff;border:1px solid #0078d7;box-sizing:border-box;"></div>
<div class="a" style="left:734px;top:435px;width:17px;height:21px;background:#cce4f7;border:1px solid #005499;box-sizing:border-box;"></div>
<div class="t" style="left:647.80px;top:440px;font-size:11px;line-height:13px;letter-spacing:0.000px;color:#000;">Activo</div>
<div class="a" style="left:647px;top:458px;width:107px;height:33px;background:rgba(0,0,0,0.22);filter:blur(1.2px);"></div>
<div class="a" style="left:644px;top:455px;width:107px;height:33px;background:#ffffff;border:1px solid #0078d7;box-sizing:border-box;"></div>
<div class="a" style="left:645px;top:456px;width:105px;height:16px;background:#3399ff;"></div>
<div class="t" style="left:647.00px;top:458px;font-size:11px;line-height:13px;letter-spacing:0.000px;color:#ffffff;">Activo</div>
<div class="t" style="left:646.00px;top:473px;font-size:11px;line-height:13px;letter-spacing:0.214px;color:#000;">Inactivo</div>
<div class="a" style="left:0px;top:0px;width:780px;height:628px;border:1px solid #2b71b5;box-sizing:border-box;"></div>
<svg width="780" height="628" viewBox="0 0 780 628"><path d="M738 443.6 L742.0 447.6 L746 443.6" fill="none" stroke="#333" stroke-width="1.1"/></svg>

</body></html>
